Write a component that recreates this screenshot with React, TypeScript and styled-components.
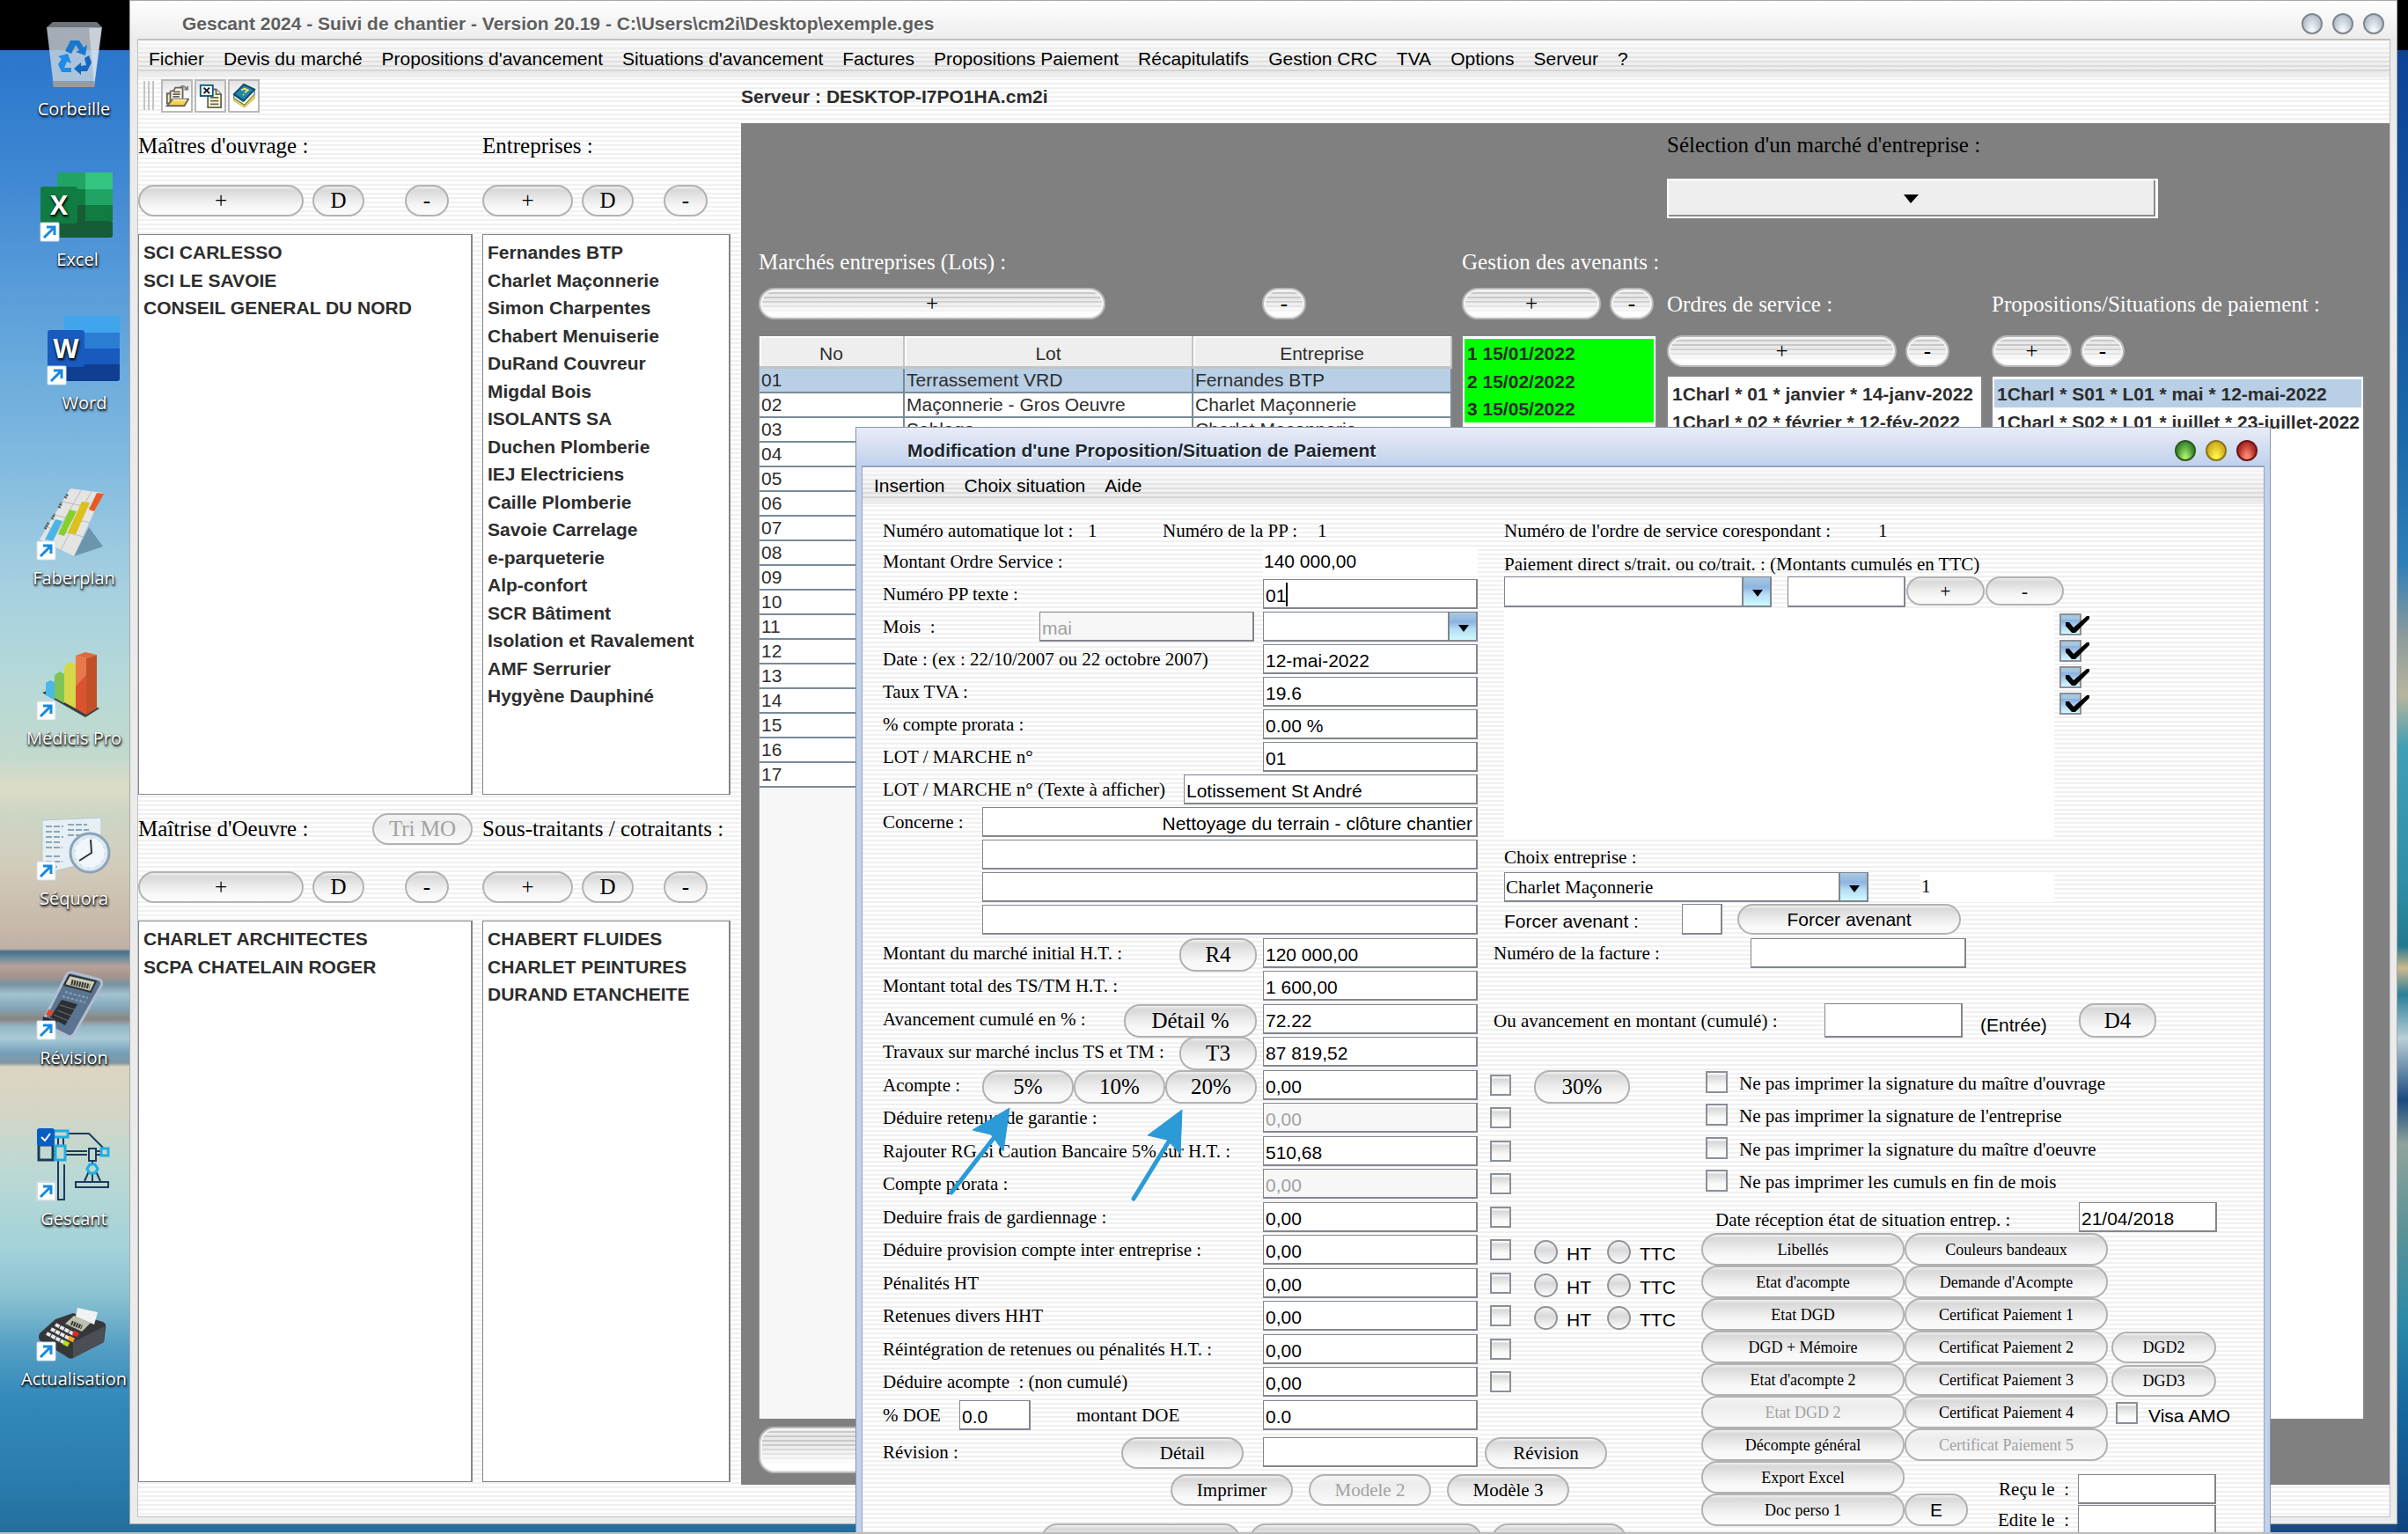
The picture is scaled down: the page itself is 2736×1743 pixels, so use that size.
import React from 'react';
import styled, { createGlobalStyle, css } from 'styled-components';

const sans = `"Liberation Sans", Arial, sans-serif`;
const serif = `"Liberation Serif", "Times New Roman", serif`;
const stripes = `repeating-linear-gradient(to bottom, #ffffff 0 3px, #f0f0f0 3px 5px)`;

const GlobalStyle = createGlobalStyle`
  * { box-sizing: border-box; }
  body { margin: 0; font-family: ${sans}; font-size: 21px; color: #000; }
  button, input, select { font: inherit; color: inherit; margin: 0; }
  ul { list-style: none; margin: 0; padding: 0; }
`;

/* ---------- desktop ---------- */

const Desktop = styled.main`
  position: relative;
  height: 100vh;
  overflow: hidden;
  border-bottom: 2px solid #bcbcbc;
  background:
    linear-gradient(to bottom, #000 0 57px, #0c4396 57px, #1553a0 300px, #1c69a9 500px, #2e7fb8 640px, #8a9a9c 720px, #b8b59c 790px, #3f9fb4 850px, #2f8fa5 1000px, #23798f 1075px, #cdb98c 1100px, #2a7f9a 1130px, #b9cfd6 1180px, #1a4a80 1250px, #8fa39a 1300px, #5a9297 1400px, #2c8aa8 1500px, #1668a0 1600px, #10437f 1743px) right top / 14px 100% no-repeat,
    linear-gradient(to right, transparent 900px, #1a4a85 1700px) left bottom / 100% 12px no-repeat,
    linear-gradient(to bottom, #000 0 57px, #2a76cc 57px, #3f87d2 200px, #62a5dc 380px, #85bce0 540px, #a5cfe0 660px, #b3d8d9 760px, #c3dacd 860px, #dcdcc6 895px, #ccd6c6 925px, #d2cdbc 980px, #c6b6a8 1060px, #bfb0a6 1078px, #44708a 1081px, #7890a0 1090px, #b8a298 1098px, #a3938c 1110px, #7892a2 1118px, #a3c3d0 1130px, #82a9bc 1144px, #8a8580 1158px, #93b6c6 1166px, #aacbd8 1180px, #74a0ba 1196px, #8296a0 1208px, #ddd5c2 1212px, #d5d5c5 1260px, #bcd9d3 1330px, #a2d2da 1420px, #8cc3d2 1470px, #559fc4 1530px, #3389bb 1590px, #2a7cae 1680px, #246e9c 1743px);
`;

const Shortcut = styled.button<{ $cx: number; $cy: number }>`
  position: absolute;
  left: ${p => p.$cx - 65}px;
  top: ${p => p.$cy - 104}px;
  width: 130px;
  padding: 0;
  border: 0;
  background: none;
  display: flex;
  flex-direction: column;
  align-items: center;
  color: #fff;
  font-family: "Open Sans", "Noto Sans", sans-serif;
  font-size: 20px;
  line-height: 32px;
  white-space: nowrap;
  text-shadow: 1px 2px 3px #000, 0 1px 2px #000;
`;

const Badge = () => (
  <g>
    <rect x="3" y="62" width="21" height="21" rx="1" fill="#fff" stroke="#cfdbe4" />
    <path d="M7 79 L18 68 M10 67 H19 V76" fill="none" stroke="#1689e0" strokeWidth="3" />
  </g>
);

const BinArt = () => (
  <>
    <path d="M14 11 L22 79 H68 L77 11 Z" fill="#c8d3df" fillOpacity=".82" />
    <path d="M14 11 L21 5 H71 L77 11 Z" fill="#6d7378" />
    <path d="M21 72 H69 L68 79 H22 Z" fill="#9b9b9b" />
    <path d="M62 12 H76 L68 76 Z" fill="#eef3f8" fillOpacity=".5" />
    <path d="M35 38 L41 26 H51 L56 34 L60 31 L58 43 L47 39 L51 37 L47 31 L42 41 Z" fill="#1579d0" />
    <path d="M27 44 L38 41 L42 52 L37 50 L34 57 H42 V62 H31 L27 53 L31 47 Z" fill="#1e8be6" />
    <path d="M57 46 L62 43 L65 51 L60 61 H53 V65 L45 58 L53 51 V55 L59 54 Z" fill="#1169c0" />
  </>
);

const OfficeArt = ({ tones, box, letter }: { tones: string[]; box: string; letter: string }) => (
  <>
    <rect x="22" y="5" width="63" height="74" rx="3" fill={tones[0]} />
    {letter === 'X' ? (
      <>
        <rect x="54" y="5" width="31" height="20" fill={tones[1]} />
        <rect x="22" y="24" width="32" height="19" fill={tones[2]} />
        <rect x="54" y="24" width="31" height="19" fill={tones[0]} />
        <rect x="22" y="42" width="32" height="34" fill={tones[3]} />
        <rect x="54" y="42" width="31" height="18" fill={tones[2]} />
        <rect x="22" y="60" width="63" height="19" rx="3" fill={tones[3]} />
      </>
    ) : (
      <>
        <rect x="22" y="24" width="63" height="18" fill={tones[1]} />
        <rect x="22" y="42" width="63" height="18" fill={tones[2]} />
        <path d="M22 60 H85 V76 a3 3 0 0 1 -3 3 H22 Z" fill={tones[3]} />
      </>
    )}
    <rect x="3" y="21" width="42" height="42" rx="3" fill={box} />
    <text x="24" y="53" textAnchor="middle" fontFamily="Open Sans" fontWeight="700" fontSize="30" fill="#fff">{letter}</text>
    <Badge />
  </>
);

const PlanArt = () => (
  <>
    <path d="M45 79 L62 46 L78 68 Z" fill="#34566e" fillOpacity=".45" />
    <path d="M41 2 L78 7 L45 79 L6 60 Z" fill="#e4e4e2" />
    <path d="M53 4 L18 66 M65 5 L30 72 M31 17 L71 25 M22 32 L64 41 M14 46 L56 57" stroke="#b9bdbf" fill="none" />
    <path d="M12 48 L16 41 M20 37 L23 31 M28 24 L31 18 M35 13 L38 8" stroke="#555" strokeWidth="3" strokeDasharray="2 1" />
    <path d="M24 37 L32 39 L21 62 L12 60 Z" fill="#4bb4e8" />
    <path d="M40 26 L48 28 L34 56 L27 54 Z" fill="#86d02c" />
    <path d="M54 17 L63 18 L47 54 L38 52 Z" fill="#dcc01c" />
    <path d="M71 7 L79 8 L68 28 L62 26 Z" fill="#e85a24" />
    <Badge />
  </>
);

const BarsArt = () => (
  <>
    <path d="M9 52 L58 80 L74 70 L24 46 Z" fill="#3a3f42" />
    <path d="M13 41 L18 38 L23 40 V60 L13 55 Z" fill="#4bb9e8" />
    <path d="M23 32 L29 28 L34 31 V64 L23 58 Z" fill="#7fc456" />
    <path d="M34 22 L41 17 L47 20 V70 L34 63 Z" fill="#d6d84a" />
    <path d="M47 10 L59 13 V77 L47 70 Z" fill="#e8794a" />
    <path d="M59 13 L71 9 V70 L59 77 Z" fill="#c14f28" />
    <path d="M47 10 L58 6 L71 9 L59 13 Z" fill="#e06a38" />
    <path d="M47 45 L59 32 V77 L47 70 Z" fill="#d03a22" fillOpacity=".6" />
    <Badge />
  </>
);

const ClockArt = () => (
  <>
    <path d="M9 15 L76 12 V60 L9 76 Z" fill="#e6eff4" stroke="#b6c7d2" />
    <path d="M13 22 H33 M13 28 H30 M13 34 H33 M13 40 H29 M13 46 H32 M13 56 H30 M13 62 H32 M13 68 H26 M38 20 H60 M38 26 H62 M38 32 H52" stroke="#8fa6b6" strokeWidth="2" strokeDasharray="7 2" />
    <circle cx="63" cy="52" r="22" fill="#dce9f1" stroke="#8aa3b8" strokeWidth="3" />
    <circle cx="63" cy="52" r="17" fill="#f0f6fa" stroke="#b9cad6" strokeDasharray="2 7" />
    <path d="M64 37 L65 52 L51 61" fill="none" stroke="#333" strokeWidth="2" />
    <Badge />
  </>
);

const CalcArt = () => (
  <>
    <path d="M37 9 Q39 6 43 7 L74 15 Q78 17 76 22 L45 77 Q42 81 38 79 L12 66 Q9 63 11 60 Z" fill="#5b7590" stroke="#b3bdd0" strokeWidth="3" />
    <path d="M40 10 L70 17 L64 29 L34 21 Z" fill="#c9cdb4" stroke="#2c3338" strokeWidth="2" />
    <path d="M42 18 L63 23" stroke="#333" strokeWidth="6" strokeDasharray="2 1" />
    <path d="M31 38 L49 43 L35 67 L18 58 Z" fill="#2b2f33" />
    <path d="M35 29 L61 36 M32 34 L58 41" stroke="#8aa2bb" strokeWidth="2" strokeDasharray="3 2" />
    <path d="M29 44 L46 49 M26 50 L42 56 M22 55 L39 62" stroke="#6d7276" strokeWidth="1" />
    <path d="M16 49 L22 51 L19 57 L13 55 Z" fill="#e4482c" />
    <path d="M10 57 L26 62 L24 68 L9 63 Z" fill="#26292c" />
    <Badge />
  </>
);

const CraneArt = () => (
  <g fill="none" strokeWidth="2">
    <g stroke="#1c3a5e">
      <rect x="5" y="20" width="16" height="17" strokeWidth="3" />
      <path d="M21 27 H24 M21 31 H24 M36 27 H60 M36 31 H60 M70 27 H76 M70 31 H76 M27 11 V21 M33 11 V21 M38 7 H62 L78 23" />
      <path d="M27 37 V82 H34 V42" />
      <rect x="62" y="24" width="8" height="14" />
      <path d="M66 38 V42 M62 50 L57 61 M66 52 V61 M70 50 L75 61" />
      <rect x="47" y="62" width="37" height="6" />
    </g>
    <g stroke="#1eaee0" strokeWidth="3">
      <rect x="24" y="21" width="11" height="16" />
      <rect x="22" y="4" width="16" height="7" />
      <rect x="76" y="24" width="8" height="8" />
      <path d="M63 42 H69 L72 47 L69 52 H63 L60 47 Z" />
    </g>
    <rect x="3" y="1" width="20" height="20" rx="3" fill="#0a5dc0" />
    <path d="M8 11 L12 15 L18 7" stroke="#fff" />
    <Badge />
  </g>
);

const TerminalArt = () => (
  <>
    <path d="M24 36 L44 29 L78 39 Q82 41 81 46 L79 62 L44 80 Q40 82 36 78 L6 60 Q4 56 6 52 Z" fill="#35373b" />
    <path d="M44 62 L80 44 L79 62 L44 80 Z" fill="#4b4e54" />
    <path d="M49 23 L72 28 L68 42 L47 33 Z" fill="#f1f1f3" />
    <path d="M45 32 L64 40 L54 50 L35 41 Z" fill="#bcc2ae" />
    <path d="M42 40 L54 45" stroke="#333" strokeWidth="5" strokeDasharray="2 1" />
    <path d="M24 42 L45 53 M19 47 L40 58 M14 52 L35 63" stroke="#e9e9ec" strokeWidth="4" strokeDasharray="5 1" />
    <path d="M44 51 L50 54" stroke="#e02a20" strokeWidth="5" />
    <path d="M39 57 L45 60" stroke="#f0a51c" strokeWidth="5" />
    <path d="M33 62 L39 65" stroke="#b9e01c" strokeWidth="5" />
    <Badge />
  </>
);

const shortcuts: { name: string; cx: number; cy: number; art: React.ReactNode }[] = [
  { name: 'Corbeille', cx: 84, cy: 124, art: <BinArt /> },
  { name: 'Excel', cx: 88, cy: 295, art: <OfficeArt tones={['#21a366', '#33c481', '#107c41', '#185c37']} box="#107c41" letter="X" /> },
  { name: 'Word', cx: 96, cy: 458, art: <OfficeArt tones={['#41a5ee', '#2b7cd3', '#185abd', '#103f91']} box="#185abd" letter="W" /> },
  { name: 'Faberplan', cx: 84, cy: 657, art: <PlanArt /> },
  { name: 'Médicis Pro', cx: 84, cy: 839, art: <BarsArt /> },
  { name: 'Séquora', cx: 84, cy: 1021, art: <ClockArt /> },
  { name: 'Révision', cx: 84, cy: 1202, art: <CalcArt /> },
  { name: 'Gescant', cx: 84, cy: 1385, art: <CraneArt /> },
  { name: 'Actualisation', cx: 84, cy: 1567, art: <TerminalArt /> },
];

/* ---------- windows ---------- */

const MainWindow = styled.section`
  position: absolute;
  left: 147px;
  right: 12px;
  top: 0;
  bottom: 9px;
  display: flex;
  flex-direction: column;
  border: 1px solid #a9a9a9;
  background: #ebebeb;
  padding: 0 7px 7px 8px;
`;

const TitleBar = styled.header<{ $tone: 'grey' | 'blue' }>`
  display: flex;
  align-items: center;
  height: 43px;
  flex: none;
  padding-top: 9px;
  font-weight: 700;
  ${p => p.$tone === 'grey'
    ? css`margin: 0 -7px 0 -8px; padding-left: 59px; padding-right: 14px; color: #5f5f5f; background: linear-gradient(#fff, #ececec);`
    : css`margin: 0 -6px; padding-left: 58px; padding-right: 14px; color: #1c2630; background: linear-gradient(#e9ecf7, #c0d1ec);`}
`;

const Title = styled.h1`
  flex: 1;
  margin: 0;
  font-size: 21px;
  line-height: 24px;
  text-shadow: 1px 2px 1px #fff;
`;

const Orbs = styled.div`
  display: flex;
  gap: 11px;
`;

const Orb = styled.button<{ $c: [string, string, string] }>`
  width: 24px;
  height: 24px;
  padding: 0;
  border: 2px solid ${p => p.$c[0]};
  border-radius: 50%;
  background: radial-gradient(ellipse at 50% 100%, ${p => p.$c[2]} 15%, ${p => p.$c[1]} 70%);
`;

const Client = styled.div`
  flex: 1;
  min-height: 0;
  display: flex;
  flex-direction: column;
  border: 2px solid #c0c0c0;
  border-width: 2px 1px 1px;
  background: ${stripes};
  padding-bottom: 36px;
`;

const MenuBar = styled.nav<{ $inset: number }>`
  display: flex;
  align-items: center;
  gap: 22px;
  height: 42px;
  flex: none;
  padding: 4px ${p => p.$inset}px 0;
  border-bottom: 4px solid #ededed;
  background:
    repeating-linear-gradient(to bottom, rgba(255,255,255,.55) 0 3px, transparent 3px 5px),
    linear-gradient(#f7f7f7, #d2d2d2);
`;

const MenuItem = styled.button`
  padding: 0;
  border: 0;
  background: none;
  line-height: 24px;
  white-space: nowrap;
`;

const ToolRow = styled.div`
  display: flex;
  align-items: flex-start;
  height: 52px;
  flex: none;
  padding-left: 6px;
`;

const Tools = styled.div`
  display: flex;
  gap: 2px;
  width: 679px;
  padding-top: 2px;
`;

const Grip = styled.span`
  width: 12px;
  height: 33px;
  margin: 2px 6px 0 0;
  background: repeating-linear-gradient(to right, #c4c4c4 0 2px, transparent 2px 5px);
`;

const Tool = styled.button`
  width: 36px;
  height: 38px;
  padding: 2px;
  border: 2px solid #b9b9b9;
  background: linear-gradient(#e2e2e2, #fff 60%);
  display: flex;
`;

const ServerName = styled.p`
  margin: 0;
  padding-top: 10px;
  line-height: 24px;
  font-weight: 700;
  color: #2b2b2b;
`;

/* ---------- shared controls ---------- */

const Pill = styled.button<{ $w?: number; $h?: number; $size?: number; $metal?: boolean; $sans?: boolean }>`
  flex: none;
  width: ${p => (p.$w ? `${p.$w}px` : '100%')};
  height: ${p => p.$h ?? 36}px;
  padding: 0;
  border: 2px solid #b2b2b2;
  border-radius: 18px;
  font-family: ${p => (p.$sans ? sans : serif)};
  font-size: ${p => p.$size ?? 25}px;
  line-height: 26px;
  white-space: nowrap;
  background: linear-gradient(#f0f0f0 0, #d8d8d8 12%, #ececec 48%, #f8f8f8 75%, #fafafa);
  ${p => p.$metal && css`
    border-color: #b8b8b8;
    box-shadow: inset 0 0 0 2px #f6f6f6;
    background:
      repeating-linear-gradient(to bottom, rgba(255,255,255,.6) 0 3px, transparent 3px 5px),
      linear-gradient(#cacaca, #c8c8c8 35%, #fff 85%);
  `}
  &:disabled { color: #a2a2a2; background: linear-gradient(#f4f4f4, #ececec 30%, #fafafa); }
`;

const Heading = styled.div<{ $light?: boolean }>`
  display: flex;
  align-items: center;
  justify-content: space-between;
  height: 36px;
  flex: none;
  font-family: ${serif};
  font-size: 25px;
  white-space: nowrap;
  color: ${p => (p.$light ? '#fff' : '#000')};
`;

const ButtonRow = styled.div<{ $top: number; $bottom: number }>`
  display: flex;
  gap: 10px;
  flex: none;
  margin: ${p => p.$top}px 0 ${p => p.$bottom}px;
`;

const Spacer = styled.span<{ $w: number }>`
  flex: none;
  width: ${p => p.$w}px;
`;

const ListBox = styled.ul`
  flex: 1;
  min-height: 0;
  overflow: hidden;
  padding: 3px 2px;
  border: 1px solid #82868c;
  border-right-width: 2px;
  background: #fff;
  font-weight: 700;
  color: #2d2d2d;
`;

const ListItem = styled.li<{ $fill?: string }>`
  height: 32px;
  padding-left: 3px;
  line-height: 33px;
  white-space: nowrap;
  background: ${p => p.$fill ?? 'none'};
  &:nth-child(even) { height: 31px; }
`;

/* ---------- main window layout ---------- */

const Work = styled.div`
  flex: 1;
  min-height: 0;
  display: flex;
`;

const Parties = styled.div`
  flex: none;
  width: 685px;
  display: grid;
  grid-template-columns: 380px 282px;
  grid-template-rows: 763px 1fr;
  column-gap: 11px;
  row-gap: 21px;
  padding: 0 0 3px;
`;

const Party = styled.section<{ $top: number }>`
  min-height: 0;
  display: flex;
  flex-direction: column;
  padding-top: ${p => p.$top}px;
`;

const Market = styled.div`
  flex: 1;
  min-width: 0;
  display: flex;
  gap: 11px;
  padding: 0 28px 13px 20px;
  background: #808080;
`;

const Column = styled.div<{ $w?: number; $top: number; $bottom: number }>`
  flex: ${p => (p.$w ? `0 0 ${p.$w}px` : '1')};
  min-width: 0;
  display: flex;
  flex-direction: column;
  padding: ${p => p.$top}px 0 ${p => p.$bottom}px;
`;

const Split = styled.div`
  flex: 1;
  min-height: 0;
  display: flex;
  gap: 10px;
  margin-top: 80px;
`;

const TableBox = styled.div`
  flex: 1;
  min-height: 0;
  margin-bottom: 9px;
  border-left: 1px solid #9a9a9a;
  background: #f7f7f7;
`;

const LotTable = styled.table`
  width: 100%;
  table-layout: fixed;
  border-collapse: separate;
  border-spacing: 0;
  color: #2d2d2d;
  th {
    height: 37px;
    padding: 5px 0 0;
    font-weight: 400;
    background: #eee;
    border: solid #c4c4c4;
    border-width: 0 2px 3px 0;
    box-shadow: inset 2px 2px 0 #fff;
  }
  td {
    height: 28px;
    padding: 0 0 0 2px;
    line-height: 24px;
    background: #fff;
    border: solid #7a8a99;
    border-width: 0 2px 2px 0;
    white-space: nowrap;
    overflow: hidden;
  }
  tr.selected td { background: #b8cfe5; }
`;

const BigCombo = styled.div`
  position: relative;
  flex: none;
  width: 558px;
  height: 45px;
  margin-top: 20px;
  svg { position: absolute; left: 269px; top: 18px; pointer-events: none; }
  select {
    width: 100%;
    height: 100%;
    appearance: none;
    background: #eee;
    border: 2px solid #fff;
    border-right-width: 3px;
    box-shadow: inset -2px -2px 0 #8a8a8a;
    border-radius: 0;
  }
`;

/* ---------- payment dialog ---------- */

const Dialog = styled.section`
  position: absolute;
  left: 972px;
  top: 485px;
  width: 1608px;
  bottom: -60px;
  display: flex;
  flex-direction: column;
  padding: 0 6px;
  border: 1px solid #8794a8;
  background: #c1d2ee;
`;

const DialogClient = styled.div`
  flex: 1;
  border: 2px solid #95a3ba;
  border-width: 2px 1px 0;
  background: ${stripes};
`;

const Form = styled.div`
  position: relative;
  padding: 13px 53px 0 23px;
  font-family: ${serif};
`;

const Upper = styled.div`
  display: flex;
  gap: 30px;
`;

const Lower = styled.div`
  display: grid;
  grid-template-columns: 684px 246px 1fr;
  grid-template-rows: 150px 413px auto;
  margin-top: 1px;
`;

const Fields = styled.div<{ $mixed?: boolean }>`
  grid-row: 1 / 3;
  width: 676px;
  display: flex;
  flex-direction: column;
  ${p => p.$mixed && css`& > :nth-child(even) { height: 38px; }`}
`;

const Row = styled.div<{ $h?: number; $gap?: number; $pad?: number }>`
  display: flex;
  align-items: flex-start;
  gap: ${p => p.$gap ?? 7}px;
  height: ${p => p.$h ?? 37}px;
  flex: none;
  padding-left: ${p => p.$pad ?? 0}px;
`;

const Caption = styled.label<{ $w?: number; $sans?: boolean; $h?: number }>`
  flex: none;
  width: ${p => (p.$w ? `${p.$w}px` : 'auto')};
  line-height: ${p => p.$h ?? 35}px;
  font-family: ${p => (p.$sans ? sans : serif)};
  white-space: pre;
`;

const Push = styled.span`
  flex: 1;
`;

const Group = styled.div<{ $gap?: number }>`
  display: flex;
  gap: ${p => p.$gap ?? 0}px;
`;

const Field = styled.input<{ $w: number; $h?: number; $plain?: boolean; $right?: boolean; $serif?: boolean }>`
  flex: none;
  width: ${p => p.$w}px;
  height: ${p => p.$h ?? 34}px;
  padding: 4px 4px 0 2px;
  border: 1px solid #82868f;
  border-right-width: 2px;
  border-bottom-width: 2px;
  border-radius: 0;
  background: #fff;
  font-family: ${p => (p.$serif ? serif : sans)};
  text-align: ${p => (p.$right ? 'right' : 'left')};
  ${p => p.$plain && css`border-color: #fff; padding: 0;`}
  &:disabled { background: #f7f7f7; color: #a0a0a0; }
`;

const Counts = styled.div`
  display: grid;
  grid-template-columns: 233px 85px 176px auto;
  height: 35px;
  line-height: 34px;
  white-space: nowrap;
`;

const Combo = styled.div<{ $w: number; $h?: number }>`
  position: relative;
  flex: none;
  width: ${p => p.$w}px;
  height: ${p => p.$h ?? 34}px;
  select {
    width: 100%;
    height: 100%;
    padding: 0 36px 0 1px;
    appearance: none;
    border: 1px solid #82868f;
    border-right-width: 2px;
    border-bottom-width: 2px;
    border-radius: 0;
    font-family: ${serif};
    background:
      linear-gradient(#a9cbe2, #8db3e0 35%, #b4dcf4 60%, #cdfbff) right top / 30px 100% no-repeat,
      linear-gradient(#82868f, #82868f) right 30px top / 2px 100% no-repeat,
      #fff;
  }
  svg { position: absolute; right: 10px; top: 14px; pointer-events: none; }
`;

const CaretField = styled.div`
  position: relative;
  &::after {
    content: "";
    position: absolute;
    left: 26px;
    top: 4px;
    width: 2px;
    height: 27px;
    background: #000;
  }
`;

const Tick = styled.input`
  flex: none;
  width: 25px;
  height: 25px;
  appearance: none;
  border: 2px solid #8b8f98;
  background: linear-gradient(#f4f4f4 0 2px, #d6d6d6 3px, #fafafa 70%);
  &:checked { background: linear-gradient(#a5c8df 0 4px, #8bb0e0 6px, #d2fbff); }
`;

const TickCell = styled.span`
  position: relative;
  display: flex;
  width: 25px;
  height: 25px;
  svg { position: absolute; left: 4px; top: 1px; pointer-events: none; }
`;

const TickColumn = styled.div`
  display: flex;
  flex-direction: column;
  gap: 5px;
  padding: 6px 0 0 6px;
`;

const Dot = styled.input`
  width: 27px;
  height: 27px;
  flex: none;
  appearance: none;
  border: 2px solid #90949b;
  border-radius: 50%;
  background: linear-gradient(#f2f2f2, #d9d9d9 40%, #fafafa);
`;

const Side = styled.div`
  flex: 1;
  display: flex;
  flex-direction: column;
`;

const Pane = styled.div`
  display: flex;
  height: 261px;
`;

const Blank = styled.div`
  width: 625px;
  background: #fff;
`;

const Billing = styled.div`
  grid-column: 2 / 4;
  padding-left: 10px;
`;

const Marks = styled.div`
  display: flex;
  flex-direction: column;
  padding: 0 0 0 6px;
  & > :nth-child(even) { height: 38px; }
`;

const MarkRow = styled.div`
  display: flex;
  align-items: flex-start;
  height: 37px;
  & > ${Tick} { margin: 5px 26px 0 0; height: 24px; width: 24px; }
`;

const Choice = styled.label`
  display: flex;
  gap: 10px;
  width: 83px;
  padding-top: 6px;
  font-family: ${sans};
  line-height: 32px;
`;

const Output = styled.div`
  grid-column: 3;
  grid-row: 2 / 4;
`;

const Options = styled.div`
  height: 150px;
  & > :nth-child(even) { height: 38px; }
`;

const Option = styled.label`
  display: flex;
  gap: 13px;
  height: 37px;
  padding-left: 5px;
  line-height: 30px;
  white-space: nowrap;
  & > ${Tick} { margin-top: 1px; }
`;

const Prints = styled.div`
  display: grid;
  grid-template-columns: 231px 231px 123px;
  grid-auto-rows: 37px;
`;

const Extras = styled.div`
  grid-column: 3;
  grid-row: 4 / 8;
  padding: 1px 0 0 4px;
  display: flex;
  flex-direction: column;
  gap: 2px;
`;

const Visa = styled.label`
  display: flex;
  gap: 12px;
  padding: 4px 0 0 5px;
  font-family: ${sans};
  line-height: 32px;
  white-space: nowrap;
`;

const Stamps = styled.div`
  grid-column: 2 / 4;
  grid-row: 8 / 10;
  display: grid;
  grid-template-columns: 1fr 157px;
  column-gap: 10px;
  grid-auto-rows: 35px;
  justify-items: end;
  width: 354px;
  padding-top: 15px;
`;

const DocE = styled.div`
  grid-column: 2;
  grid-row: 9;
  width: 72px;
`;

const Footer = styled.div`
  grid-column: 1 / 3;
  display: flex;
  flex-direction: column;
  padding-top: 4px;
`;

const FooterRow = styled.div<{ $h: number; $gap: number; $pad: number }>`
  display: flex;
  gap: ${p => p.$gap}px;
  height: ${p => p.$h}px;
  padding-left: ${p => p.$pad}px;
`;

const Pointers = styled.svg`
  position: absolute;
  left: 93px;
  top: 683px;
  pointer-events: none;
`;

/* ---------- data ---------- */

const menus = ['Fichier', 'Devis du marché', "Propositions d'avancement", "Situations d'avancement", 'Factures', 'Propositions Paiement', 'Récapitulatifs', 'Gestion CRC', 'TVA', 'Options', 'Serveur', '?'];
const owners = ['SCI CARLESSO', 'SCI LE SAVOIE', 'CONSEIL GENERAL DU NORD'];
const companies = ['Fernandes BTP', 'Charlet Maçonnerie', 'Simon Charpentes', 'Chabert Menuiserie', 'DuRand Couvreur', 'Migdal Bois', 'ISOLANTS SA', 'Duchen Plomberie', 'IEJ Electriciens', 'Caille Plomberie', 'Savoie Carrelage', 'e-parqueterie', 'Alp-confort', 'SCR Bâtiment', 'Isolation et Ravalement', 'AMF Serrurier', 'Hygyène Dauphiné'];
const lots: Record<string, [string, string]> = {
  '01': ['Terrassement VRD', 'Fernandes BTP'],
  '02': ['Maçonnerie - Gros Oeuvre', 'Charlet Maçonnerie'],
  '03': ['Sablage', 'Charlet Maçonnerie'],
};
const lotNumbers = Array.from({ length: 17 }, (_, i) => String(i + 1).padStart(2, '0'));

const deductions: { id: string; label: string; value: string; off?: boolean }[] = [
  { id: 'rg', label: 'Déduire retenue de garantie :', value: '0,00', off: true },
  { id: 'caution', label: 'Rajouter RG si Caution Bancaire 5% sur H.T. :', value: '510,68' },
  { id: 'prorata', label: 'Compte prorata :', value: '0,00', off: true },
  { id: 'garde', label: 'Deduire frais de gardiennage :', value: '0,00' },
  { id: 'provision', label: 'Déduire provision compte inter entreprise :', value: '0,00' },
  { id: 'penalites', label: 'Pénalités HT', value: '0,00' },
  { id: 'retenues', label: 'Retenues divers HHT', value: '0,00' },
  { id: 'reint', label: 'Réintégration de retenues ou pénalités H.T. :', value: '0,00' },
  { id: 'deduire', label: 'Déduire acompte  : (non cumulé)', value: '0,00' },
];

const prints: string[][] = [
  ['Libellés', 'Couleurs bandeaux'],
  ["Etat d'acompte", "Demande d'Acompte"],
  ['Etat DGD', 'Certificat Paiement 1'],
  ['DGD + Mémoire', 'Certificat Paiement 2'],
  ["Etat d'acompte 2", 'Certificat Paiement 3'],
  ['Etat DGD 2', 'Certificat Paiement 4'],
  ['Décompte général', 'Certificat Paiement 5'],
  ['Export Excel'],
  ['Doc perso 1'],
];
const disabledPrints = ['Etat DGD 2', 'Certificat Paiement 5'];

const silver: [string, string, string] = ['#80868c', '#b9c4cd', '#f2f8fc'];

/* ---------- pieces ---------- */

const DownArrow = () => (
  <svg width="12" height="10" viewBox="0 0 12 10"><path d="M0 1 H12 L6 9 Z" fill="#000" /></svg>
);

const Dropdown = ({ id, w, h, value, label }: { id: string; w: number; h?: number; value?: string; label?: string }) => (
  <Combo $w={w} $h={h}>
    <select id={id} aria-label={label}><option>{value ?? ''}</option></select>
    <DownArrow />
  </Combo>
);

const AddDelete = ({ plus, gap, top, bottom }: { plus: number; gap: number; top: number; bottom: number }) => (
  <ButtonRow $top={top} $bottom={bottom}>
    <Pill $w={plus}>+</Pill>
    <Pill $w={59}>D</Pill>
    <Spacer $w={gap} />
    <Pill $w={50}>-</Pill>
  </ButtonRow>
);

const Names = ({ items }: { items: string[] }) => (
  <ListBox>{items.map(n => <ListItem key={n}>{n}</ListItem>)}</ListBox>
);

const TextRow = ({ id, label, value, off, plain, w = 244, right }: { id: string; label: string; value?: string; off?: boolean; plain?: boolean; w?: number; right?: boolean }) => (
  <Row>
    <Caption htmlFor={id}>{label}</Caption>
    <Push />
    <Field id={id} $w={w} $plain={plain} $right={right} disabled={off} defaultValue={value} />
  </Row>
);

const App = () => (
  <>
    <GlobalStyle />
    <Desktop>
      {shortcuts.map(s => (
        <Shortcut key={s.name} $cx={s.cx} $cy={s.cy}>
          <svg width="90" height="88" viewBox="0 0 90 88">{s.art}</svg>
          {s.name}
        </Shortcut>
      ))}

      <MainWindow>
        <TitleBar $tone="grey">
          <Title>Gescant 2024 - Suivi de chantier - Version 20.19 - C:\Users\cm2i\Desktop\exemple.ges</Title>
          <Orbs>
            <Orb $c={silver} aria-label="Réduire" />
            <Orb $c={silver} aria-label="Agrandir" />
            <Orb $c={silver} aria-label="Fermer" />
          </Orbs>
        </TitleBar>
        <Client>
          <MenuBar $inset={12}>{menus.map(m => <MenuItem key={m}>{m}</MenuItem>)}</MenuBar>
          <ToolRow>
            <Tools>
              <Grip />
              <Tool aria-label="Ouvrir">
                <svg width="30" height="30" viewBox="0 0 30 30">
                  <path d="M7 9 H11 L13 5 H22 V18" fill="#fffbe0" stroke="#66635c" strokeWidth="2" />
                  <path d="M3 12 H7 V9 V24 H3 Z" fill="#fff3a8" stroke="#66635c" strokeWidth="2" />
                  <path d="M11 10 H19 M10 13 H19 M10 16 H18" stroke="#66635c" strokeWidth="2" />
                  <path d="M3 27 L10 19 H29 L24 27 Z" fill="#fbd04a" stroke="#66635c" strokeWidth="2" />
                  <path d="M10 20 H27" stroke="#fff6b0" strokeWidth="2" />
                  <path d="M19 4 Q25 1 27 8 M24 7 H28 V3" fill="none" stroke="#7d7d7d" strokeWidth="2" />
                </svg>
              </Tool>
              <Tool aria-label="Exporter vers Excel">
                <svg width="30" height="30" viewBox="0 0 30 30">
                  <path d="M12 7 H22 L28 13 V29 H12 Z" fill="#fffbc8" stroke="#66635c" strokeWidth="2" />
                  <path d="M22 7 V13 H28" fill="#fff" stroke="#66635c" strokeWidth="2" />
                  <path d="M15 17 H25 M15 21 H25 M15 25 H25" stroke="#66635c" strokeWidth="2" />
                  <rect x="3" y="2" width="15" height="13" fill="#fff" stroke="#0d5a80" strokeWidth="2" />
                  <path d="M7 5 L14 12 M14 5 L7 12" stroke="#111" strokeWidth="2" />
                </svg>
              </Tool>
              <Tool aria-label="Aide">
                <svg width="30" height="30" viewBox="0 0 30 30">
                  <path d="M3 18 L16 27 L28 14 V18 L16 29 L3 21 Z" fill="#f7e070" stroke="#c9a227" />
                  <path d="M3 14 L14 22 L28 8 V13 L16 26 L3 18 Z" fill="#fdf6c0" stroke="#0d5a80" />
                  <path d="M3 13 L15 1 L28 7 L15 21 Z" fill="#2484b0" stroke="#0b4a6b" strokeWidth="2" />
                  <path d="M12 8 L16 6 L20 8 L16 11 M14 14 L15 13" fill="none" stroke="#ffe65a" strokeWidth="2" />
                </svg>
              </Tool>
            </Tools>
            <ServerName>Serveur : DESKTOP-I7PO1HA.cm2i</ServerName>
          </ToolRow>

          <Work>
            <Parties>
              <Party $top={8}>
                <Heading>Maîtres d'ouvrage :</Heading>
                <AddDelete plus={188} gap={26} top={26} bottom={20} />
                <Names items={owners} />
              </Party>
              <Party $top={8}>
                <Heading>Entreprises :</Heading>
                <AddDelete plus={103} gap={14} top={26} bottom={20} />
                <Names items={companies} />
              </Party>
              <Party $top={0}>
                <Heading>Maîtrise d'Oeuvre : <Pill $w={114} disabled>Tri MO</Pill></Heading>
                <AddDelete plus={188} gap={26} top={30} bottom={20} />
                <Names items={['CHARLET ARCHITECTES', 'SCPA CHATELAIN ROGER']} />
              </Party>
              <Party $top={0}>
                <Heading>Sous-traitants / cotraitants :</Heading>
                <AddDelete plus={103} gap={14} top={30} bottom={20} />
                <Names items={['CHABERT FLUIDES', 'CHARLET PEINTURES', 'DURAND ETANCHEITE']} />
              </Party>
            </Parties>

            <Market>
              <Column $w={788} $top={140} $bottom={0}>
                <Heading $light>Marchés entreprises (Lots) :</Heading>
                <ButtonRow $top={11} $bottom={19}>
                  <Pill $metal $w={394}>+</Pill>
                  <Spacer $w={158} />
                  <Pill $metal $w={50}>-</Pill>
                </ButtonRow>
                <TableBox>
                  <LotTable>
                    <colgroup><col width="165" /><col width="328" /><col /></colgroup>
                    <thead><tr><th>No</th><th>Lot</th><th>Entreprise</th></tr></thead>
                    <tbody>
                      {lotNumbers.map(n => (
                        <tr key={n} className={n === '01' ? 'selected' : undefined}>
                          <td>{n}</td><td>{lots[n]?.[0]}</td><td>{lots[n]?.[1]}</td>
                        </tr>
                      ))}
                    </tbody>
                  </LotTable>
                </TableBox>
                <Pill $metal $h={53} aria-label="Ouvrir le marché" />
              </Column>

              <Column $w={222} $top={140} $bottom={61}>
                <Heading $light>Gestion des avenants :</Heading>
                <ButtonRow $top={11} $bottom={18}>
                  <Pill $metal $w={158}>+</Pill>
                  <Pill $metal $w={50}>-</Pill>
                </ButtonRow>
                <ListBox>
                  {['1 15/01/2022', '2 15/02/2022', '3 15/05/2022'].map(t => <ListItem key={t} $fill="#00ff00">{t}</ListItem>)}
                </ListBox>
              </Column>

              <Column $top={7} $bottom={61}>
                <Heading as="label" htmlFor="marche">Sélection d'un marché d'entreprise :</Heading>
                <BigCombo>
                  <select id="marche"><option></option></select>
                  <svg width="17" height="10" viewBox="0 0 17 10"><path d="M0 0 H17 L8 10 Z" /></svg>
                </BigCombo>
                <Split>
                  <Column $w={359} $top={0} $bottom={0}>
                    <Heading $light>Ordres de service :</Heading>
                    <ButtonRow $top={17} $bottom={10}>
                      <Pill $metal $w={261}>+</Pill>
                      <Pill $metal $w={50}>-</Pill>
                    </ButtonRow>
                    <ListBox>
                      <ListItem>1Charl * 01 * janvier * 14-janv-2022</ListItem>
                      <ListItem>1Charl * 02 * février * 12-fév-2022</ListItem>
                    </ListBox>
                  </Column>
                  <Column $top={0} $bottom={0}>
                    <Heading $light>Propositions/Situations de paiement :</Heading>
                    <ButtonRow $top={17} $bottom={10}>
                      <Pill $metal $w={91}>+</Pill>
                      <Pill $metal $w={50}>-</Pill>
                    </ButtonRow>
                    <ListBox>
                      <ListItem $fill="#b8cfe5">1Charl * S01 * L01 * mai * 12-mai-2022</ListItem>
                      <ListItem>1Charl * S02 * L01 * juillet * 23-juillet-2022</ListItem>
                    </ListBox>
                  </Column>
                </Split>
              </Column>
            </Market>
          </Work>
        </Client>
      </MainWindow>

      <Dialog>
        <TitleBar $tone="blue">
          <Title as="h2">Modification d'une Proposition/Situation de Paiement</Title>
          <Orbs>
            <Orb $c={['#2c5a1c', '#3c8a2c', '#a6ea6a']} aria-label="Réduire" />
            <Orb $c={['#8a7418', '#d0b020', '#fff24a']} aria-label="Agrandir" />
            <Orb $c={['#6a1414', '#b02828', '#ff8a70']} aria-label="Fermer" />
          </Orbs>
        </TitleBar>
        <DialogClient>
          <MenuBar $inset={13}>
            <MenuItem>Insertion</MenuItem><MenuItem>Choix situation</MenuItem><MenuItem>Aide</MenuItem>
          </MenuBar>
          <Form>
            <Upper>
              <Fields>
                <Counts><span>Numéro automatique lot :</span><span>1</span><span>Numéro de la PP :</span><span>1</span></Counts>
                <TextRow id="mos" label="Montant Ordre Service :" value="140 000,00" plain />
                <Row>
                  <Caption htmlFor="pp">Numéro PP texte :</Caption>
                  <Push />
                  <CaretField><Field id="pp" $w={244} defaultValue="01" /></CaretField>
                </Row>
                <Row $gap={10}>
                  <Caption htmlFor="mois">Mois  :</Caption>
                  <Push />
                  <Field id="mois" $w={244} disabled defaultValue="mai" />
                  <Dropdown id="mois2" w={244} label="Choix du mois" />
                </Row>
                <TextRow id="date" label="Date : (ex : 22/10/2007 ou 22 octobre 2007)" value="12-mai-2022" />
                <TextRow id="tva" label="Taux TVA :" value="19.6" />
                <TextRow id="cp" label="% compte prorata :" value="0.00 %" />
                <TextRow id="lot" label="LOT / MARCHE n°" value="01" />
                <TextRow id="lottxt" label="LOT / MARCHE n° (Texte à afficher)" value="Lotissement St André" w={334} />
                <TextRow id="c1" label="Concerne :" value="Nettoyage du terrain - clôture chantier" w={563} right />
                <TextRow id="c2" label="" w={563} />
                <TextRow id="c3" label="" w={563} />
                <TextRow id="c4" label="" w={563} />
              </Fields>

              <Side>
                <Row $h={35} $gap={0}>
                  <Caption $w={425} $h={34}>Numéro de l'ordre de service corespondant :</Caption>
                  <Caption $h={34}>1</Caption>
                </Row>
                <Row $h={34}><Caption htmlFor="direct" $h={40}>Paiement direct s/trait. ou co/trait. : (Montants cumulés en TTC)</Caption></Row>
                <Row $h={36} $gap={1}>
                  <Dropdown id="direct" w={304} h={35} />
                  <Spacer $w={16} />
                  <Field $w={134} $h={35} aria-label="Montant" />
                  <Pill $w={89} $h={33} $size={21}>+</Pill>
                  <Pill $w={89} $h={33} $size={21}>-</Pill>
                </Row>
                <Pane>
                  <Blank />
                  <TickColumn>
                    {[1, 2, 3, 4].map(n => (
                      <TickCell key={n}>
                        <Tick type="checkbox" defaultChecked aria-label={`Ligne ${n}`} />
                        <svg width="32" height="24" viewBox="0 0 32 24"><path d="M3 9 L7 9 L12 15 L27 2 L30 2 L30 5 L14 21 L10 21 L3 13 Z" fill="#000" /></svg>
                      </TickCell>
                    ))}
                  </TickColumn>
                </Pane>
                <Row $h={39}><Caption htmlFor="choix" $h={44}>Choix entreprise :</Caption></Row>
                <Row $h={36} $gap={59}>
                  <Dropdown id="choix" w={414} value="Charlet Maçonnerie" />
                  <Field $w={152} $plain $serif readOnly defaultValue="1" aria-label="Numéro d'entreprise" />
                </Row>
                <Row $gap={17}>
                  <Caption htmlFor="forcer" $sans $w={185} $h={40}>Forcer avenant :</Caption>
                  <Field id="forcer" $w={46} $h={35} />
                  <Pill $w={254} $h={35} $size={21} $sans>Forcer avenant</Pill>
                </Row>
              </Side>
            </Upper>

            <Lower>
              <Fields $mixed>
                <Row>
                  <Caption htmlFor="initial">Montant du marché initial H.T. :</Caption><Push />
                  <Pill $w={88} $h={38}>R4</Pill>
                  <Field id="initial" $w={244} defaultValue="120 000,00" />
                </Row>
                <TextRow id="ts" label="Montant total des TS/TM H.T. :" value="1 600,00" />
                <Row>
                  <Caption htmlFor="av">Avancement cumulé en % :</Caption><Push />
                  <Pill $w={151} $h={38}>Détail %</Pill>
                  <Field id="av" $w={244} defaultValue="72.22" />
                </Row>
                <Row>
                  <Caption htmlFor="trav">Travaux sur marché inclus TS et TM :</Caption><Push />
                  <Pill $w={88} $h={38}>T3</Pill>
                  <Field id="trav" $w={244} defaultValue="87 819,52" />
                </Row>
                <Row>
                  <Caption htmlFor="acompte">Acompte :</Caption><Push />
                  <Group>
                    <Pill $w={104} $h={38}>5%</Pill><Pill $w={104} $h={38}>10%</Pill><Pill $w={104} $h={38}>20%</Pill>
                  </Group>
                  <Field id="acompte" $w={244} defaultValue="0,00" />
                </Row>
                {deductions.map(d => <TextRow key={d.id} {...d} />)}
                <Row $gap={0}>
                  <Caption htmlFor="doe" $w={87}>% DOE</Caption>
                  <Field id="doe" $w={81} defaultValue="0.0" />
                  <Spacer $w={52} />
                  <Caption htmlFor="mdoe">montant DOE</Caption><Push />
                  <Field id="mdoe" $w={244} defaultValue="0.0" />
                </Row>
              </Fields>

              <Billing>
                <Row $h={74} $gap={0}>
                  <Caption htmlFor="facture" $w={292}>Numéro de la facture :</Caption>
                  <Field id="facture" $w={245} />
                </Row>
                <Row $gap={0}>
                  <Caption htmlFor="avm" $w={376} $h={40}>Ou avancement en montant (cumulé) :</Caption>
                  <Field id="avm" $w={157} $h={39} />
                  <Spacer $w={20} />
                  <Caption $sans $w={112} $h={50}>(Entrée)</Caption>
                  <Pill $w={88} $h={39}>D4</Pill>
                </Row>
              </Billing>

              <Marks>
                <MarkRow>
                  <Tick type="checkbox" aria-label="Acompte" />
                  <Pill $w={109} $h={38}>30%</Pill>
                </MarkRow>
                {deductions.map(d => (
                  <MarkRow key={d.id}>
                    <Tick type="checkbox" aria-label={d.label} />
                    {['provision', 'penalites', 'retenues'].includes(d.id) && (
                      <>
                        <Choice><Dot type="radio" name={d.id} />HT</Choice>
                        <Choice><Dot type="radio" name={d.id} />TTC</Choice>
                      </>
                    )}
                  </MarkRow>
                ))}
              </Marks>

              <Output>
                <Options>
                  {["Ne pas imprimer la signature du maître d'ouvrage", "Ne pas imprimer la signature de l'entreprise", "Ne pas imprimer la signature du maître d'oeuvre", 'Ne pas imprimer les cumuls en fin de mois'].map(t => (
                    <Option key={t}><Tick type="checkbox" />{t}</Option>
                  ))}
                </Options>
                <Row $h={35} $gap={0} $pad={16}>
                  <Caption htmlFor="recep" $w={413} $h={40}>Date réception état de situation entrep. :</Caption>
                  <Field id="recep" $w={157} defaultValue="21/04/2018" />
                </Row>
                <Prints>
                  {prints.map((pair, r) => pair.map((t, c) => (
                    <Pill key={t} $h={37} $size={18} disabled={disabledPrints.includes(t)} style={{ gridRow: r + 1, gridColumn: c + 1 }}>{t}</Pill>
                  )))}
                  <Extras>
                    <Pill $w={119} $h={36} $size={18}>DGD2</Pill>
                    <Pill $w={119} $h={36} $size={18}>DGD3</Pill>
                    <Visa><Tick type="checkbox" />Visa AMO</Visa>
                  </Extras>
                  <Stamps>
                    <Caption htmlFor="recu">Reçu le  :</Caption><Field id="recu" $w={157} />
                    <Caption htmlFor="edite">Edite le  :</Caption><Field id="edite" $w={157} />
                  </Stamps>
                  <DocE><Pill $h={37} $size={21} $sans>E</Pill></DocE>
                </Prints>
              </Output>

              <Footer>
                <FooterRow $h={42} $gap={22} $pad={0}>
                  <Caption htmlFor="revision" $w={249}>Révision :</Caption>
                  <Pill $w={139} $size={21}>Détail</Pill>
                  <Group $gap={8}>
                    <Field id="revision" $w={244} />
                    <Pill $w={139} $size={21}>Révision</Pill>
                  </Group>
                </FooterRow>
                <FooterRow $h={56} $gap={18} $pad={327}>
                  <Pill $w={139} $size={21}>Imprimer</Pill>
                  <Pill $w={139} $size={21} disabled>Modele 2</Pill>
                  <Pill $w={139} $size={21}>Modèle 3</Pill>
                </FooterRow>
                <FooterRow $h={36} $gap={11} $pad={180}>
                  <Pill $w={226} aria-label="Action 1" />
                  <Pill $w={264} aria-label="Action 2" />
                  <Pill $w={153} aria-label="Action 3" />
                </FooterRow>
              </Footer>
            </Lower>

            <Pointers width="272" height="110" viewBox="0 0 272 110">
              <g fill="#2b9ad6" stroke="#2b9ad6">
                <path d="M74 3 L32 28 L53 33 L67 52 Z" />
                <path d="M8 99 L60 32" strokeWidth="5" strokeLinecap="round" />
                <path d="M270 5 L231 34 L253 39 L268 55 Z" />
                <path d="M215 106 L258 36" strokeWidth="5" strokeLinecap="round" />
              </g>
            </Pointers>
          </Form>
        </DialogClient>
      </Dialog>
    </Desktop>
  </>
);

export default App;
